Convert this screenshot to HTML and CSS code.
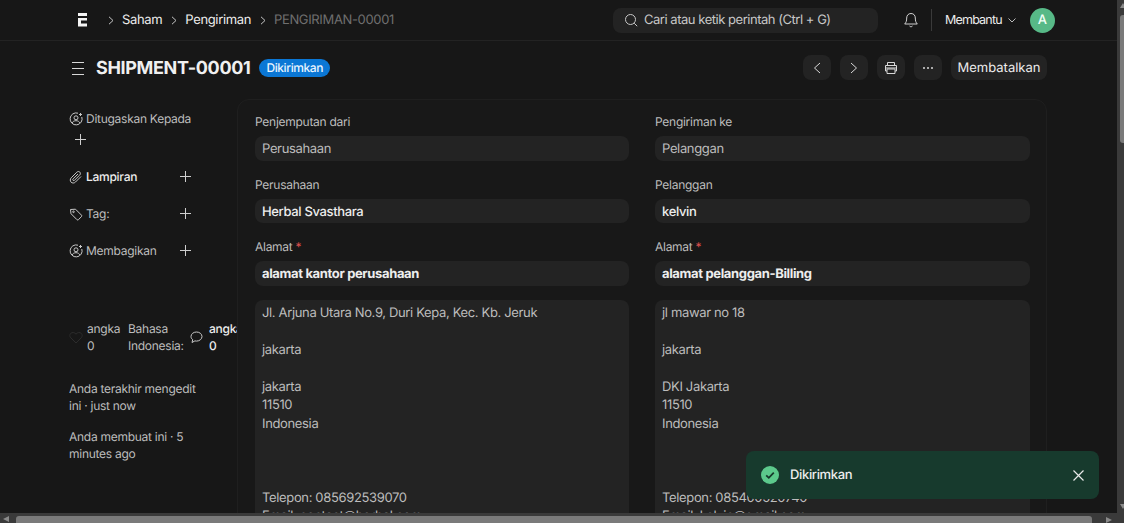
FILE: index.html
```html
<!DOCTYPE html>
<html lang="id">
<head>
<meta charset="utf-8">
<title>SHIPMENT-00001</title>
<link rel="stylesheet" href="styles.css">
</head>
<body>
<div class="app">
  <header class="navbar">
    <svg class="logo" width="12" height="14" viewBox="0 0 12 14"><path d="M1 0h9v3H1zM1 5h9v2.600H4v3h6V13.500H1z" fill="#f4f4f4"/></svg>
    <nav class="crumbs">
      <svg class="sep" width="6" height="9" viewBox="0 0 6 9" fill="none" stroke="#c4c4c4"><path d="M1 .8L5 4.500 1 8.200"/></svg><a class="crumb">Saham</a>
      <svg class="sep" width="6" height="9" viewBox="0 0 6 9" fill="none" stroke="#c4c4c4"><path d="M1 .8L5 4.500 1 8.200"/></svg><a class="crumb">Pengiriman</a>
      <svg class="sep" width="6" height="9" viewBox="0 0 6 9" fill="none" stroke="#c4c4c4"><path d="M1 .8L5 4.500 1 8.200"/></svg><span class="crumb-current">PENGIRIMAN-00001</span>
    </nav>
    <div class="search">
      <svg class="ico" width="14" height="14" viewBox="0 0 14 14" fill="none" stroke="#c8c8c8" stroke-width="1"><circle cx="6.500" cy="6.500" r="5"/><path d="M10.200 10.200l3 3"/></svg>
      <span>Cari atau ketik perintah (Ctrl + G)</span>
    </div>
    <svg class="bell" width="14" height="16" viewBox="0 0 14 16" fill="none" stroke="#d0d0d0" stroke-width="1"><path d="M7 1.500c-2.800 0-4.300 2-4.300 4.500 0 3-.6 4.500-2 6h12.600c-1.400-1.500-2-3-2-6 0-2.500-1.500-4.500-4.300-4.500zM5.500 14c.8 1 2.200 1 3 0"/></svg>
    <span class="nav-divider"></span>
    <span class="help">Membantu<svg width="8" height="5" viewBox="0 0 8 5" fill="none" stroke="#bbb" stroke-width="1"><path d="M.5 .5L4 4l3.500-3.500"/></svg></span>
    <span class="avatar">A</span>
  </header>

  <div class="page-head">
    <svg class="menu" width="12" height="13" viewBox="0 0 12 13" stroke="#d8d8d8" stroke-width="1"><path d="M0 .5h12M0 6.500h12M0 12.500h12"/></svg>
    <h1 class="title">SHIPMENT-00001</h1>
    <span class="badge">Dikirimkan</span>
    <div class="actions">
      <button class="icon-btn"><svg width="8" height="12" viewBox="0 0 8 12" fill="none" stroke="#d8d8d8"><path d="M7 1L1.500 6 7 11"/></svg></button>
      <button class="icon-btn"><svg width="8" height="12" viewBox="0 0 8 12" fill="none" stroke="#d8d8d8"><path d="M1 1l5.500 5L1 11"/></svg></button>
      <button class="icon-btn"><svg width="14" height="14" viewBox="0 0 14 14" fill="none" stroke="#d8d8d8"><path d="M3.500 4V1.500h7V4M3 10H1.500V4.500h11V10H11M3 8h8v4.500H3zM1.500 7h11"/></svg></button>
      <button class="icon-btn"><svg width="10" height="2" viewBox="0 0 10 2" fill="#d8d8d8"><circle cx="1" cy="1" r="1"/><circle cx="5" cy="1" r="1"/><circle cx="9" cy="1" r="1"/></svg></button>
      <button class="text-btn">Membatalkan</button>
    </div>
  </div>

  <div class="body">
    <aside class="side">
      <div class="side-block assign">
        <div class="side-label"><svg class="side-ico" width="14" height="14" viewBox="0 0 14 14" fill="none" stroke="#c8c8c8"><path d="M9 1.200A6 6 0 1 0 12.800 5M5 5.800a2 2 0 1 0 4 0 2 2 0 0 0-4 0zM3 11c.8-1.500 2.200-2.300 4-2.300s3.200.8 4 2.300M11.500 1v3M10 2.500h3"/></svg>Ditugaskan Kepada</div>
        <span class="plus assign-plus"></span>
      </div>
      <div class="side-row"><span class="side-label strong"><svg class="side-ico" width="14" height="14" viewBox="0 0 14 14" fill="none" stroke="#c8c8c8"><path d="M12 6.500L6.500 12c-1.300 1.300-3.200 1.300-4.400.2S1 9 2.200 7.800L7.800 2.200c.9-.9 2.200-.9 3-.1s.8 2.100-.1 3L5.500 10.200c-.5.500-1.100.5-1.500.1s-.4-1 .1-1.500L9 4"/></svg>Lampiran</span><span class="plus"></span></div>
      <div class="side-row"><span class="side-label"><svg class="side-ico" width="14" height="14" viewBox="0 0 14 14" fill="none" stroke="#c8c8c8"><path d="M1.500 2.500l.5 4.200 6 6c.4.400 1 .4 1.400 0l3.100-3.100c.4-.4.400-1 0-1.400l-6-6z"/><circle cx="4.500" cy="4.800" r=".8"/></svg>Tag:</span><span class="plus"></span></div>
      <div class="side-row"><span class="side-label"><svg class="side-ico" width="14" height="14" viewBox="0 0 14 14" fill="none" stroke="#c8c8c8"><path d="M9 1.200A6 6 0 1 0 12.800 5M5 5.800a2 2 0 1 0 4 0 2 2 0 0 0-4 0zM3 11c.8-1.500 2.200-2.300 4-2.300s3.200.8 4 2.300M11.500 1v3M10 2.500h3"/></svg>Membagikan</span><span class="plus"></span></div>

      <div class="stats">
        <svg class="heart" width="14" height="13" viewBox="0 0 14 13" fill="none" stroke="#2c2c2c"><path d="M7 12L1.800 6.800C.4 5.400.6 3.400 1.800 2.300 3.100 1.100 5.500 1.200 7 3.200c1.500-2 3.900-2.100 5.200-.9 1.200 1.100 1.400 3.100 0 4.500z"/></svg>
        <span class="stat stat-likes">angka<br>0</span>
        <span class="stat stat-lang">Bahasa Indonesia:</span>
        <svg class="bubble" width="13" height="13" viewBox="0 0 13 13" fill="none" stroke="#c8c8c8"><path d="M6.500 1C3.400 1 1 3 1 5.500c0 1.300.6 2.400 1.700 3.200L2 11.500l2.900-1.600c.5.100 1 .2 1.600.2C9.600 10.100 12 8 12 5.500S9.600 1 6.500 1z"/></svg>
        <span class="stat stat-comments">angka<br>0</span>
      </div>

      <p class="meta">Anda terakhir mengedit ini · just now</p>
      <p class="meta">Anda membuat ini · 5 minutes ago</p>
    </aside>

    <main class="card">
      <div class="col">
        <label class="lbl">Penjemputan dari</label>
        <div class="field muted">Perusahaan</div>
        <label class="lbl">Perusahaan</label>
        <div class="field medium">Herbal Svasthara</div>
        <label class="lbl">Alamat <i class="req">*</i></label>
        <div class="field bold">alamat kantor perusahaan</div>
        <div class="area">Jl. Arjuna Utara No.9, Duri Kepa, Kec. Kb. Jeruk<br><br>jakarta<br><br>jakarta<br>11510<br>Indonesia<br><br><br><br>Telepon: 085692539070<br>Email: contact@herbal.com</div>
      </div>
      <div class="col">
        <label class="lbl">Pengiriman ke</label>
        <div class="field muted">Pelanggan</div>
        <label class="lbl">Pelanggan</label>
        <div class="field medium">kelvin</div>
        <label class="lbl">Alamat <i class="req">*</i></label>
        <div class="field bold">alamat pelanggan-Billing</div>
        <div class="area">jl mawar no 18<br><br>jakarta<br><br>DKI Jakarta<br>11510<br>Indonesia<br><br><br><br>Telepon: 085400520740<br>Email: kelvin@gmail.com</div>
      </div>
    </main>
  </div>
</div>

<div class="toast">
  <svg class="toast-check" width="18" height="18" viewBox="0 0 18 18"><circle cx="9" cy="9" r="9" fill="#5cc98c"/><path d="M5.200 9.300l2.600 2.500 5-5.200" fill="none" stroke="#17382b" stroke-width="1.800"/></svg>
  <span class="toast-text">Dikirimkan</span>
  <svg class="toast-x" width="11" height="11" viewBox="0 0 11 11" stroke="#e8e8e8" stroke-width="1.200"><path d="M.5 .5l10 10M10.500 .5l-10 10"/></svg>
</div>

<div class="vbar"><span class="arrow-up"></span><span class="vthumb"></span><span class="arrow-down"></span></div>
<div class="hbar"><span class="arrow-left"></span><span class="hthumb"></span><span class="arrow-right"></span></div>
</body>
</html>
```
FILE: styles.css
```css
* { box-sizing: border-box; }
html, body { margin: 0; height: 100%; overflow: hidden; background: #171717; }
body { font-family: Inter, "Liberation Sans", sans-serif; font-size: 13px; letter-spacing: -.35px; color: #c8c8c8; text-rendering: geometricPrecision; }
.app { width: 1124px; height: 523px; overflow: hidden; }

.navbar { height: 41px; display: flex; align-items: center; padding-left: 77px; border-bottom: 1px solid #232323; }
.logo { flex: none; }
.crumbs { display: flex; align-items: center; margin-left: 19px; width: 505px; font-size: 13px; }
.sep { flex: none; margin-right: 8px; }
.crumb { color: #ededed; margin-right: 9px; }
.crumb-current { color: #6f6f6f; }
.search { width: 265px; height: 25px; background: #232323; border-radius: 8px; display: flex; align-items: center; gap: 6px; padding-left: 11px; color: #c8c8c8; font-size: 13px; letter-spacing: -.47px; }
.ico { flex: none; }
.bell { margin-left: 26px; flex: none; }
.nav-divider { width: 1px; height: 22px; background: #3a3a3a; margin-left: 13px; }
.help { margin-left: 13px; color: #ededed; display: flex; align-items: center; gap: 6px; font-size: 12.500px; letter-spacing: -.8px; }
.avatar { margin-left: 14px; width: 25px; height: 25px; border-radius: 50%; background: #57b987; color: #f2fff7; display: flex; align-items: center; justify-content: center; font-size: 13px; font-weight: 500; }

.page-head { height: 58px; padding: 1px 77px 5px 72px; display: flex; align-items: center; }
.menu { flex: none; }
.title { margin: 2px 0 0 12px; font-size: 18px; font-weight: 700; color: #f0f0f0; line-height: 24px; letter-spacing: -.34px; }
.badge { margin-left: 9px; height: 18px; padding: 0 7px; border-radius: 9px; background: #0b77d5; color: #eaf5ff; font-size: 12px; line-height: 18px; font-weight: 500; letter-spacing: -.4px; }
.actions { margin-left: auto; display: flex; gap: 9px; margin-top: -1px; }
.icon-btn { width: 28px; height: 25px; border: 0; background: #232323; border-radius: 8px; display: flex; align-items: center; justify-content: center; padding: 0; }
.text-btn { height: 25px; width: 96px; border: 0; padding: 0; background: #232323; border-radius: 8px; color: #ededed; font: 400 13px Inter, sans-serif; text-rendering: geometricPrecision; }

.body { display: flex; align-items: flex-start; padding-left: 69px; }
.side { width: 168px; flex: none; padding-top: 11px; overflow: hidden; font-size: 12px; line-height: 17px; letter-spacing: -.27px; }
.side-ico { flex: none; margin-right: 3px; }
.side-label { display: flex; align-items: center; color: #bdbdbd; }
.strong { color: #ededed; font-weight: 500; }
.assign { height: 50px; }
.plus { display: inline-block; width: 11px; height: 11px; background: linear-gradient(#cfcfcf,#cfcfcf) center/100% 1px no-repeat, linear-gradient(#cfcfcf,#cfcfcf) center/1px 100% no-repeat; }
.assign-plus { display: block; margin: 7px 0 0 6px; }
.side-row { display: flex; justify-content: space-between; align-items: center; height: 17px; width: 122px; margin-bottom: 20px; }
.assign + .side-row { margin-top: 8px; }
.stats { display: flex; align-items: center; margin-top: 61px; width: 168px; overflow: hidden; line-height: 17px; }
.heart { flex: none; margin-right: 4px; }
.stat { flex: none; }
.stat-likes { width: 41px; color: #bdbdbd; }
.stat-lang { width: 62px; color: #bdbdbd; }
.bubble { flex: none; margin-right: 6px; }
.stat-comments { color: #ededed; font-weight: 500; }
.meta { margin: 0; width: 132px; color: #bdbdbd; }
.stats + .meta { margin-top: 26px; }
.meta + .meta { margin-top: 14px; }

.card { width: 810px; height: 500px; flex: none; background: #181818; border: 1px solid #1f1f1f; border-radius: 12px; padding: 13px 17px 0; display: flex; gap: 26px; }
.col { width: 374px; flex: none; }
.col + .col { width: 375px; }
.lbl { display: block; font-size: 12px; line-height: 17px; color: #bdbdbd; margin-bottom: 6px; letter-spacing: -.27px; }
.req { color: #e2504f; font-style: normal; }
.field { height: 24.600px; background: #232323; border-radius: 8px; padding: 0 7px; line-height: 26.600px; margin-bottom: 15px; }
.muted { color: #bdbdbd; }
.medium { color: #ededed; font-weight: 500; }
.bold { color: #ededed; font-weight: 700; }
.field.bold { margin-bottom: 0; }
.area { margin-top: 14px; background: #232323; border-radius: 8px; padding: 4px 7px; line-height: 18.500px; color: #bdbdbd; height: 300px; }

.toast { position: absolute; left: 746px; top: 451px; width: 353px; height: 48px; border-radius: 8px; background: #173a2d; display: flex; align-items: center; padding: 0 15px; }
.toast-check { flex: none; }
.toast-text { margin-left: 11px; color: #ededed; font-weight: 500; }
.toast-x { margin-left: auto; }

.vbar { position: absolute; right: 0; top: 0; width: 7px; height: 523px; background: #3a3a3a; padding-left: 3px; }
.arrow-up { display: block; width: 0; height: 0; margin-top: 3px; border-left: 3.500px solid transparent; border-right: 3.500px solid transparent; border-bottom: 5px solid #8a8a8a; }
.vthumb { display: block; margin-top: 7px; width: 4px; height: 128px; background: #7a7a7a; border-radius: 3px 0 0 3px; }
.arrow-down { display: block; width: 0; height: 0; margin-top: 361px; border-left: 3.500px solid transparent; border-right: 3.500px solid transparent; border-top: 5px solid #8a8a8a; }
.hbar { position: absolute; left: 0; bottom: 0; width: 1124px; height: 10px; background: #3a3a3a; display: flex; align-items: flex-end; }
.arrow-left { margin: 0 0 1px 3px; width: 0; height: 0; border-top: 3px solid transparent; border-bottom: 3px solid transparent; border-right: 6px solid #8a8a8a; }
.hthumb { margin-left: 7px; width: 1076px; height: 7px; background: #7a7a7a; border-radius: 3px 3px 0 0; }
.arrow-right { margin: 0 0 0 14px; width: 0; height: 0; border-top: 3.500px solid transparent; border-bottom: 3.500px solid transparent; border-left: 6px solid #8a8a8a; }
```
